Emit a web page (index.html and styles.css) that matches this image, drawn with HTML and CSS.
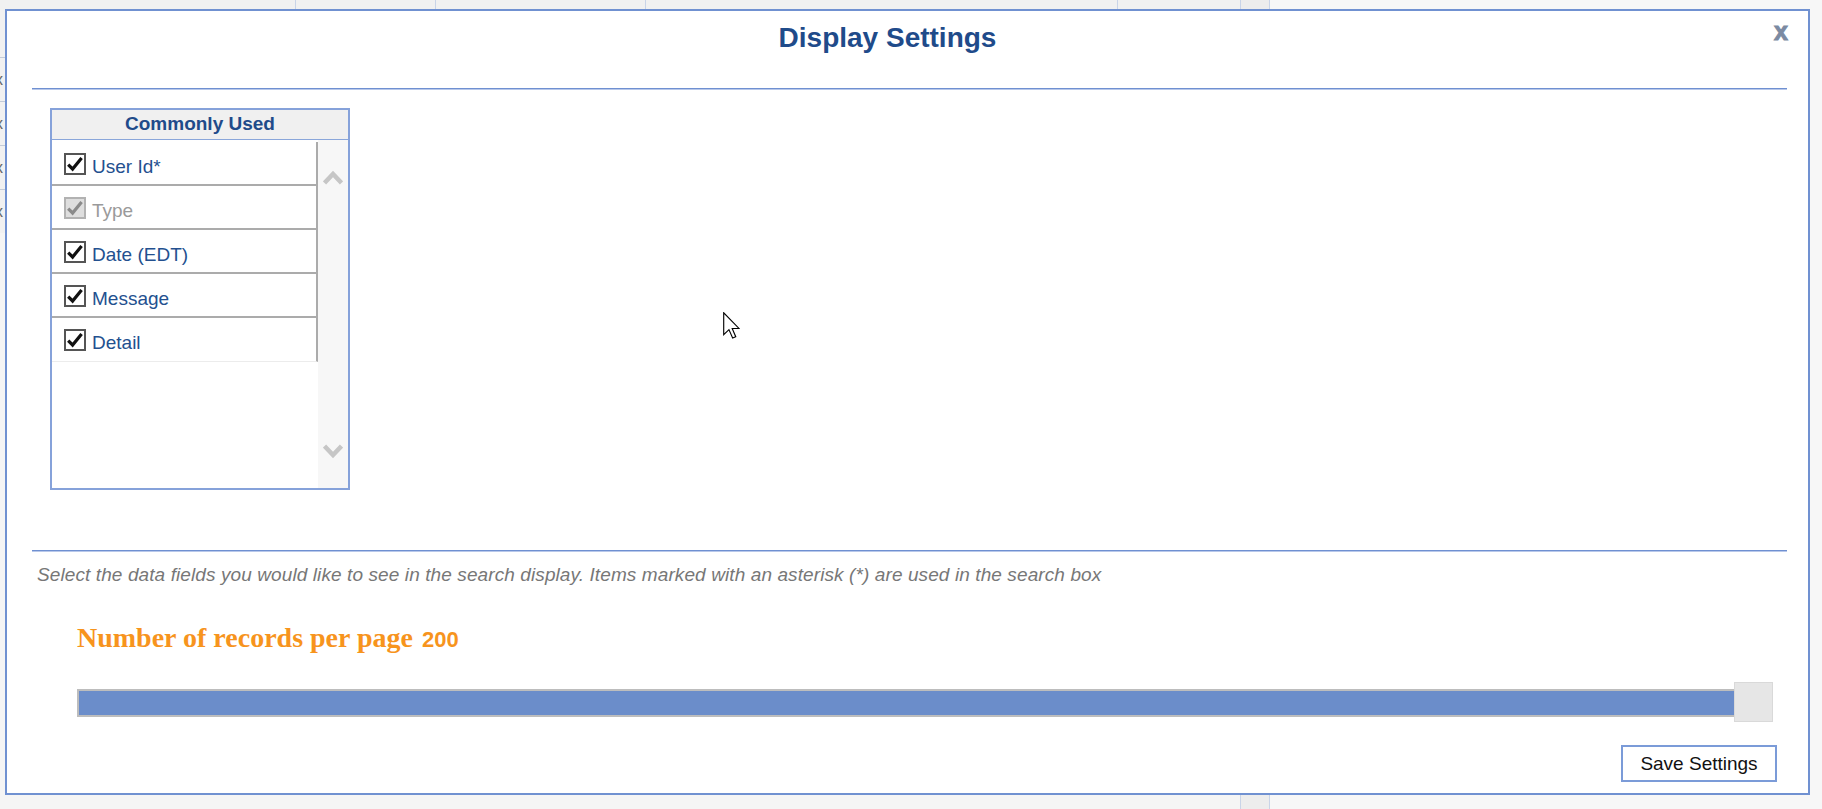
FILE: index.html
```html
<!DOCTYPE html>
<html lang="en">
<head>
<meta charset="utf-8">
<title>Display Settings</title>
<link rel="stylesheet" href="styles.css">
</head>
<body>
<div class="page">
  <div class="table">
    <div class="thead">
      <div class="th c1"></div>
      <div class="th c2"></div>
      <div class="th c3"></div>
      <div class="th c4"></div>
      <div class="th c5"></div>
    </div>
    <div class="trow"><span class="rx">x</span></div>
    <div class="trow"><span class="rx">x</span></div>
    <div class="trow"><span class="rx">x</span></div>
    <div class="trow"><span class="rx">x</span></div>
  </div>
  <div class="vscroll"></div>
  <div class="rest"></div>
</div>

<div class="modal">
  <div class="modal-head">
    <h1 class="title">Display Settings</h1>
  </div>
  <div class="close">x</div>
  <div class="rule"></div>

  <div class="fields">
    <div class="fields-head">Commonly Used</div>
    <div class="fields-body">
      <div class="list">
        <div class="item">
          <span class="cb"><svg viewBox="0 0 18 18"><path d="M2.2 9.6 L6.6 14 L15.6 3"/></svg></span>
          <span class="label">User Id*</span>
        </div>
        <div class="item disabled">
          <span class="cb"><svg viewBox="0 0 18 18"><path d="M2.2 9.6 L6.6 14 L15.6 3"/></svg></span>
          <span class="label">Type</span>
        </div>
        <div class="item">
          <span class="cb"><svg viewBox="0 0 18 18"><path d="M2.2 9.6 L6.6 14 L15.6 3"/></svg></span>
          <span class="label">Date (EDT)</span>
        </div>
        <div class="item">
          <span class="cb"><svg viewBox="0 0 18 18"><path d="M2.2 9.6 L6.6 14 L15.6 3"/></svg></span>
          <span class="label">Message</span>
        </div>
        <div class="item last">
          <span class="cb"><svg viewBox="0 0 18 18"><path d="M2.2 9.6 L6.6 14 L15.6 3"/></svg></span>
          <span class="label">Detail</span>
        </div>
      </div>
      <div class="scroll">
        <svg class="chev" viewBox="0 0 20 15"><polyline points="1.5,13 10,4 18.5,13"/></svg>
        <svg class="chev" viewBox="0 0 20 15"><polyline points="1.5,2 10,11 18.5,2"/></svg>
      </div>
    </div>
  </div>

  <div class="rule rule2"></div>
  <p class="help">Select the data fields you would like to see in the search display. Items marked with an asterisk (*) are used in the search box</p>

  <div class="records">Number of records per page <span class="count">200</span></div>

  <div class="slider">
    <div class="track"></div>
    <div class="thumb"></div>
  </div>

  <div class="actions">
    <button class="save" type="button">Save Settings</button>
  </div>
</div>

<svg class="cursor" viewBox="0 0 12 19"><path d="M0.5 0.5 L0.5 16 L4.2 12.4 L6.8 18.3 L9 17.4 L6.5 11.6 L11.3 11.6 Z"/></svg>
</body>
</html>
```

FILE: styles.css
```css
html, body {
  margin: 0;
  padding: 0;
}

body {
  width: 1822px;
  height: 809px;
  overflow: hidden;
  position: relative;
  font-family: "Liberation Sans", Arial, sans-serif;
  background: #f5f5f5;
}

/* background page */
.page {
  display: flex;
  height: 809px;
}

.table {
  width: 1240px;
  align-self: flex-start;
  background: #f1f1f1;
}

.thead {
  display: flex;
  height: 57px;
}

.th {
  box-sizing: border-box;
  border-right: 1px solid #c9d4e8;
}

.c1 { width: 296px; }
.c2 { width: 140px; }
.c3 { width: 210px; }
.c4 { width: 472px; }
.c5 { width: 122px; border-right: none; }

.trow {
  height: 43px;
  border-top: 1px solid #c3cbd8;
}

.rx {
  display: block;
  margin-left: -5px;
  font-size: 16px;
  line-height: 43px;
  color: #666;
}

.vscroll {
  width: 30px;
  box-sizing: border-box;
  background: #ededed;
  border-left: 1px solid #c9d4e8;
  border-right: 1px solid #c9d4e8;
}

.rest {
  flex: 1;
  background: #f7f7f7;
}

/* modal */
.modal {
  position: absolute;
  left: 5px;
  top: 9px;
  width: 1805px;
  height: 786px;
  box-sizing: border-box;
  border: 2px solid #7091d1;
  background: #fff;
  padding: 0 21px 0 25px;
}

.modal-head {
  padding: 10px 44px 33px 0;
}

.title {
  margin: 0;
  text-align: center;
  font-size: 28px;
  line-height: 34px;
  font-weight: bold;
  color: #1f4b8a;
}

.close {
  position: absolute;
  right: 20px;
  top: 8px;
  font-size: 25px;
  line-height: 25px;
  font-weight: bold;
  color: #7b8aa2;
  -webkit-text-stroke: 1px #7b8aa2;
}

.rule {
  height: 0;
  border-top: 1px solid #6f90d1;
  border-bottom: 1px solid #b8c8ea;
}

.fields {
  margin: 18px 0 0 18px;
  width: 300px;
  height: 382px;
  box-sizing: border-box;
  border: 2px solid #86a2da;
  display: flex;
  flex-direction: column;
}

.fields-head {
  line-height: 27px;
  padding-bottom: 2px;
  border-bottom: 1px solid #8aa6da;
  background: #f0f0f0;
  text-align: center;
  font-weight: bold;
  font-size: 19px;
  color: #1f4b8a;
}

.fields-body {
  flex: 1;
  display: flex;
}

.list {
  width: 266px;
  padding-top: 2px;
}

.item {
  height: 42px;
  border-right: 2px solid #ababab;
  border-bottom: 2px solid #ababab;
  display: flex;
  align-items: flex-start;
  padding-left: 12px;
}

.item.last {
  height: 43px;
  border-bottom: 1px solid #ececec;
}

.cb {
  flex: none;
  width: 22px;
  height: 22px;
  box-sizing: border-box;
  border: 2px solid #555;
  background: #fff;
  margin-top: 11px;
  display: flex;
}

.cb svg {
  width: 18px;
  height: 18px;
  fill: none;
  stroke: #111;
  stroke-width: 3.2;
}

.label {
  margin-left: 6px;
  margin-top: 14px;
  font-size: 19px;
  line-height: 22px;
  color: #23508f;
}

.item.disabled .cb {
  border-color: #b2b2b2;
  background: #dedede;
}

.item.disabled .cb svg {
  stroke: #8a8a8a;
}

.item.disabled .label {
  color: #9a9a9a;
}

.scroll {
  flex: 1;
  background: #f7f7f7;
  display: flex;
  flex-direction: column;
  justify-content: space-between;
  align-items: center;
  padding: 30px 0 29px;
}

.chev {
  width: 20px;
  height: 15px;
  fill: none;
  stroke: #c6c6c6;
  stroke-width: 4.5;
}

.rule2 {
  margin-top: 60px;
}

.help {
  margin: 12px 0 0 0;
  padding-left: 5px;
  font-size: 19px;
  line-height: 22px;
  font-style: italic;
  letter-spacing: 0.1px;
  color: #777;
}

.records {
  margin: 36px 0 0 45px;
  font-family: "Liberation Serif", "Times New Roman", serif;
  font-weight: bold;
  font-size: 28px;
  line-height: 32px;
  color: #f7941d;
}

.count {
  font-family: "Liberation Sans", Arial, sans-serif;
  font-size: 22px;
  margin-left: 2px;
}

.slider {
  margin: 26px 14px 0 45px;
  height: 40px;
  position: relative;
  display: flex;
  align-items: flex-start;
}

.track {
  flex: 1;
  height: 28px;
  margin-top: 7px;
  box-sizing: border-box;
  border: 2px solid #bdbdbd;
  background: #6b8dca;
}

.thumb {
  position: absolute;
  right: 0;
  top: 0;
  width: 39px;
  height: 40px;
  box-sizing: border-box;
  background: #e6e6e6;
  border: 1px solid #d9d9d9;
}

.actions {
  display: flex;
  justify-content: flex-end;
  margin-top: 23px;
  padding-right: 10px;
}

.save {
  width: 156px;
  height: 37px;
  box-sizing: border-box;
  padding: 0;
  border: 2px solid #7b9bd8;
  background: #fff;
  font-family: "Liberation Sans", Arial, sans-serif;
  font-size: 19px;
  color: #111;
}

.cursor {
  position: absolute;
  left: 723px;
  top: 312px;
  width: 17px;
  height: 27px;
  fill: #fff;
  stroke: #000;
  stroke-width: 0.8;
  stroke-linejoin: miter;
}
```
